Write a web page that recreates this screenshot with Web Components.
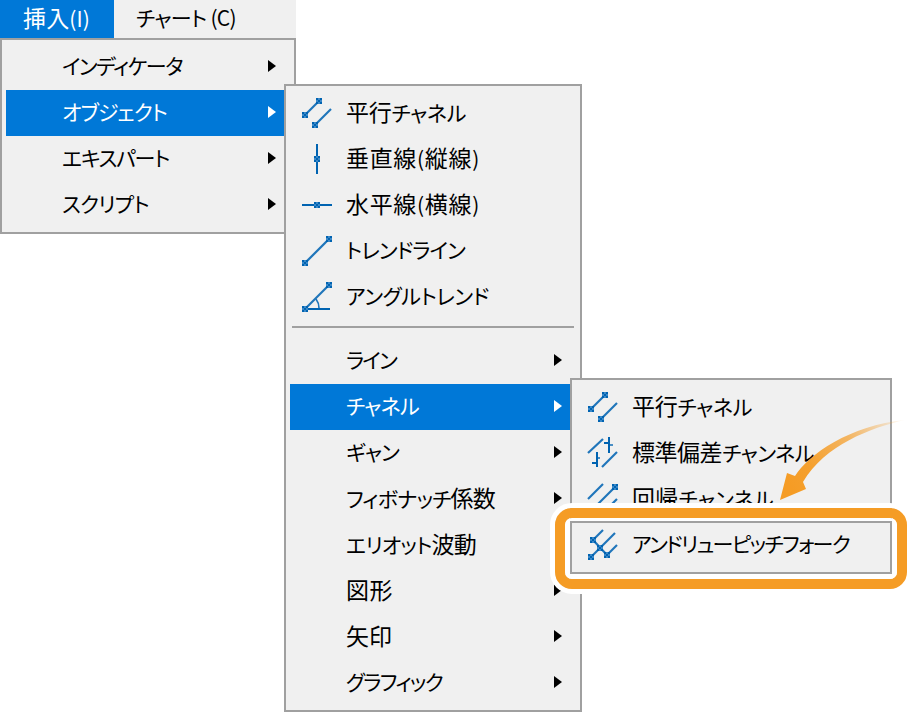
<!DOCTYPE html>
<html lang="ja"><head><meta charset="utf-8"><title>挿入メニュー</title>
<style>
html,body{margin:0;background:#fff;}
body{width:912px;height:712px;overflow:hidden;font:21px/1 "Noto Sans CJK JP","Noto Sans",sans-serif;color:#000;font-feature-settings:"palt";}
.k{font-size:23px}
</style></head><body>
<mt-stage>
  <mt-menubar>
    <mt-bar-item selected w="67"><span class="k">挿入</span>(I)</mt-bar-item>
    <mt-bar-item w="100">チャート (C)</mt-bar-item>
  </mt-menubar>
  <mt-menu style="left:0;top:38px;width:296px">
    <mt-item pad="56" w="120" arrow>インディケータ</mt-item>
    <mt-item pad="56" w="105" arrow selected>オブジェクト</mt-item>
    <mt-item pad="56" w="107" arrow>エキスパート</mt-item>
    <mt-item pad="56" w="87" arrow>スクリプト</mt-item>
  </mt-menu>
  <mt-menu style="left:284px;top:84px;width:298px">
    <mt-item icon="parallel" w="120"><span class="k">平行</span>チャネル</mt-item>
    <mt-item icon="vertical" w="134"><span class="k">垂直線</span>(<span class="k">縦線</span>)</mt-item>
    <mt-item icon="horizontal" w="134"><span class="k">水平線</span>(<span class="k">横線</span>)</mt-item>
    <mt-item icon="trend" w="119">トレンドライン</mt-item>
    <mt-item icon="angle" w="143">アングルトレンド</mt-item>
    <mt-sep></mt-sep>
    <mt-item icon="none" w="50" arrow>ライン</mt-item>
    <mt-item icon="none" w="73" arrow selected>チャネル</mt-item>
    <mt-item icon="none" w="53" arrow>ギャン</mt-item>
    <mt-item icon="none" w="149" arrow>フィボナッチ<span class="k">係数</span></mt-item>
    <mt-item icon="none" w="130">エリオット<span class="k">波動</span></mt-item>
    <mt-item icon="none" w="47" arrow><span class="k">図形</span></mt-item>
    <mt-item icon="none" w="46" arrow><span class="k">矢印</span></mt-item>
    <mt-item icon="none" w="96" arrow>グラフィック</mt-item>
  </mt-menu>
  <mt-menu style="left:570px;top:378px;width:322px">
    <mt-item icon="parallel" w="120"><span class="k">平行</span>チャネル</mt-item>
    <mt-item icon="stddev" w="182"><span class="k">標準偏差</span>チャンネル</mt-item>
    <mt-item icon="regression" w="142"><span class="k">回帰</span>チャンネル</mt-item>
    <mt-item icon="pitchfork" w="217">アンドリューピッチフォーク</mt-item>
  </mt-menu>
  <mt-callout></mt-callout>
  <mt-pointer></mt-pointer>
</mt-stage>
<script>
const C='#1f75ba';
const sq=(x,y)=>`<rect x="${x-3}" y="${y-3}" width="6" height="6" fill="#0063b1"/>`+
  [[-1,-3],[-3,-1],[1,-1],[-1,1]].map(([a,b])=>`<rect x="${x+a}" y="${y+b}" width="2" height="2" fill="#3a88c8"/>`).join('');
const ln=(a,b,c,d,w=2.2)=>`<line x1="${a}" y1="${b}" x2="${c}" y2="${d}" stroke="${a===c||b===d?'#0063b1':C}" stroke-width="${a===c||b===d?Math.min(w,2):w}"/>`;
const ICONS={
 none:'',
 parallel:ln(7,25,21,11)+sq(7,25)+sq(21,11)+ln(17,35,33,19)+sq(17,35),
 vertical:ln(19,8,19,38)+sq(19,23),
 horizontal:ln(4,23,34,23)+sq(19,23),
 trend:ln(7,35,31,11)+sq(7,35)+sq(31,11),
 angle:ln(7,35,31,11)+ln(7,35,32,35)+`<path d="M18 25Q21 29 21 34" fill="none" stroke="${C}" stroke-width="1.6"/>`+sq(7,35)+sq(31,11),
 stddev:ln(4,23,19,9)+ln(25,7,25,23)+ln(20,13,25,13)+ln(25,15,29,15,1.4)+ln(13,22,13,37)+ln(8,33,13,33)+ln(13,28,16,28,1.4)+ln(18,37,33,22),
 regression:ln(4,23,19,8)+ln(14,28,33,9)+sq(31,11)+ln(18,38,33,23),
 pitchfork:ln(7,35,16,26)+ln(9,18,23,33)+ln(9,18,19,8)+ln(16,26,31,11)+ln(23,33,33,23)+sq(7,35)+sq(16,26)+sq(9,18)+sq(23,33)
};
function fit(h,m){
  const w=+h.getAttribute('w'); if(!w) return;
  const n=h.textContent.trim().length;
  const cur=m.getBoundingClientRect().width;
  h.style.letterSpacing=((w-cur)/n).toFixed(3)+'px';
}
function def(name,css,html,init){
  customElements.define(name,class extends HTMLElement{
    constructor(){super();const r=this.attachShadow({mode:'open'});r.innerHTML=`<style>${css}</style>${html}`;}
    connectedCallback(){init&&init(this,this.shadowRoot);}
  });
}
def('mt-stage',':host{display:block;position:relative;width:912px;height:712px;overflow:hidden}','<slot></slot>');
def('mt-menubar',':host{display:flex;width:296px;height:38px;background:#f0f0f0}','<slot></slot>');
def('mt-bar-item',`:host{display:flex;align-items:center;box-sizing:border-box;height:38px;padding:0 0 3px 22px;white-space:nowrap}
 :host(:first-child){width:114px;padding-left:23px}
 :host([selected]){background:#0078d7;color:#fff}`,'<span class="m"><slot></slot></span>',
 (h,r)=>fit(h,r.querySelector('.m')));
def('mt-menu',`:host{display:block;position:absolute;box-sizing:border-box;background:#f0f0f0;border:2px solid #a0a0a0;padding:4px}
 .col{display:flex;flex-direction:column}`,'<div class="col"><slot></slot></div>');
def('mt-sep',`:host{display:block;height:18px;padding:6px 2px 0;box-sizing:border-box}
 div{height:2px;background:#a0a0a0}`,'<div></div>');
def('mt-item',`:host{display:flex;align-items:center;height:46px;white-space:nowrap;position:relative}
 :host([selected]){background:#0078d7;color:#fff}
 svg.i{width:40px;height:46px;margin:0 8px 0 8px;flex:none;display:block}
 .t{flex:1;padding-bottom:4px}
 .a{flex:none;width:0;height:0;margin:0 14px 3px 0;border-left:8px solid currentColor;border-top:6.5px solid transparent;border-bottom:6.5px solid transparent}`,
 '<svg class="i" viewBox="0 0 40 46"></svg><span class="t"><span class="m"><slot></slot></span></span><span class="a"></span>',
 (h,r)=>{const s=r.querySelector('svg.i');
   if(h.hasAttribute('icon')) s.innerHTML=ICONS[h.getAttribute('icon')]||''; else s.remove();
   if(h.hasAttribute('pad')) r.querySelector('.t').style.paddingLeft=h.getAttribute('pad')+'px';
   if(!h.hasAttribute('arrow')) r.querySelector('.a').remove();
   fit(h,r.querySelector('.m'));});
def('mt-callout',`:host{display:block;position:absolute;left:550px;top:503px;box-sizing:border-box;width:362px;height:91px;border:5px solid #fff;border-radius:22px}
 .o{box-sizing:border-box;height:100%;border:10px solid #f59c25;border-radius:17px}
 .w{box-sizing:border-box;height:100%;border:5px solid #fff;border-top-width:3px;border-radius:7px}
 .g{box-sizing:border-box;height:100%;border:2px solid #a0a0a0}`,'<div class="o"><div class="w"><div class="g"></div></div></div>');
def('mt-pointer',`:host{display:block;position:absolute;left:770px;top:410px;width:142px;height:100px}
 svg{display:block}`,`<svg width="142" height="100" viewBox="770 410 142 100"><defs><linearGradient id="g" gradientUnits="userSpaceOnUse" x1="908" y1="420" x2="790" y2="485"><stop offset="0" stop-color="#f59c25" stop-opacity="0"/><stop offset=".45" stop-color="#f59c25" stop-opacity=".7"/><stop offset=".8" stop-color="#f59c25" stop-opacity=".95"/><stop offset="1" stop-color="#f59c25"/></linearGradient></defs>
 <path d="M780 500L787 473L795 476C808 455 850 425 905 420C870 428 825 445 803 482L806 489Z" fill="url(#g)"/></svg>`);
</script>
</body></html>
